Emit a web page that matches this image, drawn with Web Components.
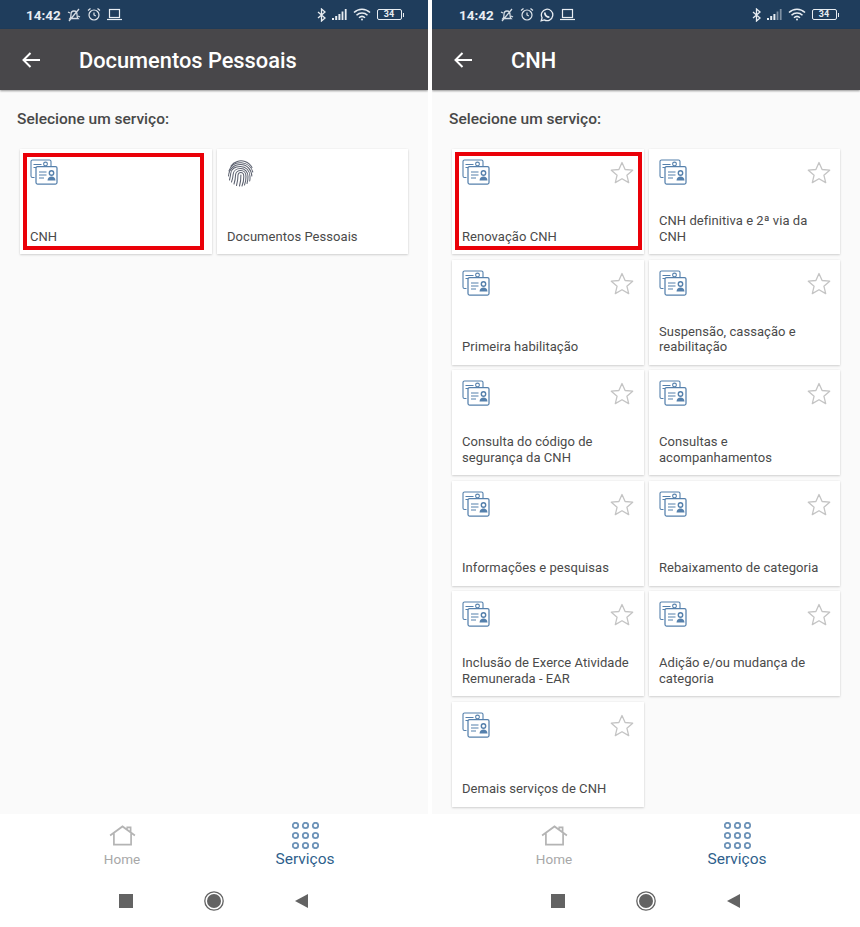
<!DOCTYPE html>
<html lang="pt"><head><meta charset="utf-8"><title>Serviços</title>
<style>html,body{margin:0;background:#fff}body{width:860px;height:927px;overflow:hidden;font-family:Roboto,"Liberation Sans",sans-serif}
.row{display:flex;gap:4px;width:860px;height:927px}
service-card:nth-child(even){--sr:9px}</style></head>
<body><div class="row">
<phone-screen title="Documentos Pessoais" extra="">
  <service-card icon="cnh" marked nostar style="--mr:8px;--mt:4px">CNH</service-card>
  <service-card icon="finger" nostar>Documentos Pessoais</service-card>
</phone-screen>
<phone-screen title="CNH" extra="wa" weak>
  <service-card icon="cnh" marked style="--mr:2px;--mt:3px">Renovação CNH</service-card>
  <service-card icon="cnh">CNH definitiva e 2ª via da CNH</service-card>
  <service-card icon="cnh">Primeira habilitação</service-card>
  <service-card icon="cnh">Suspensão, cassação e reabilitação</service-card>
  <service-card icon="cnh">Consulta do código de segurança da CNH</service-card>
  <service-card icon="cnh">Consultas e acompanhamentos</service-card>
  <service-card icon="cnh">Informações e pesquisas</service-card>
  <service-card icon="cnh">Rebaixamento de categoria</service-card>
  <service-card icon="cnh">Inclusão de Exerce Atividade Remunerada - EAR</service-card>
  <service-card icon="cnh">Adição e/ou mudança de categoria</service-card>
  <service-card icon="cnh">Demais serviços de CNH</service-card>
</phone-screen>
</div>
<script>
const CNH=`<svg width="28" height="27" viewBox="0 0 28 27" fill="none" stroke="#5580ac" stroke-width="1.1">
<path d="M4.500 18.500H2.500a1.500 1.500 0 0 1-1.500-1.500V2.500A1.500 1.500 0 0 1 2.500 1h17a1.500 1.500 0 0 1 1.500 1.500V7"/>
<path d="M3.500 5.500h8M3.500 8.500h5" stroke-width="1.200"/><circle cx="15.500" cy="5" r="1.900"/>
<rect x="6" y="7.500" width="21" height="17.500" rx="1.500" fill="#fff" stroke-width="1.250"/>
<path d="M9 13h7.500M9 16h7.500M9 19h5" stroke-width="1.200"/>
<circle cx="21.500" cy="14" r="2.200" stroke-width="1.400"/><path d="M17.500 21.500c0-5.500 8-5.500 8 0z" fill="#5580ac" stroke="none"/></svg>`;
const FINGER=`<svg width="28" height="28" viewBox="0 0 28 28" fill="none" stroke="#5d6270" stroke-width="1.05" stroke-linecap="round">
<path d="M4 7C7 2.500 13 .8 18 2.500c3 1 5.500 3 7 6"/>
<path d="M2 12C4 6 9 3.300 14.500 3.800 20 4.300 24.500 8 25.800 13"/>
<path d="M1.500 17C2 10 7 5.500 13.500 5.500 20 5.500 24.500 10.500 24.800 17"/>
<path d="M2.500 21C3 19 3.500 17 3.700 14.500 4.300 10 8.300 7.500 13.500 7.500 19 7.500 22.800 11.500 23 17.500 23.100 19 23 20.500 22.700 22"/>
<path d="M4.500 23C5.500 20.500 6 17.500 6.200 15 6.500 11.800 9.500 9.500 13.500 9.500 18 9.500 21 13 21 17.500 21 20 20.700 22.500 20 24.500"/>
<path d="M7 25C8 22 8.500 18.500 8.600 15.500 8.800 13.300 11 11.500 13.700 11.500 16.800 11.500 19 14 19 17.500 19 20.500 18.500 23.500 17.500 26"/>
<path d="M9.500 26.500C10.500 23 11 19 11 16 11.200 14.500 12.400 13.500 13.800 13.500 15.600 13.500 16.800 15 16.800 17.500 16.800 21 16.300 24 15 27"/>
<path d="M12.500 27C13.500 23.500 14 20 13.900 16"/></svg>`;
const STAR=`<svg width="24" height="23" viewBox="0 0 24 23" fill="none" stroke="#c4c4c4" stroke-width="1.3" stroke-linejoin="round"><path d="M12 1.500l3.100 7 7.600.7-5.800 5 1.800 7.400L12 17.700l-6.700 3.900 1.800-7.400-5.800-5 7.600-.7z"/></svg>`;
const WA=`<svg width="14" height="14" viewBox="0 0 14 14" fill="none" stroke="#e8edf2" stroke-width="1.3"><path d="M1.200 12.800l.9-3.100A5.700 5.700 0 1 1 4.300 11.900z"/><path d="M4.800 4.600c0 2.600 2 4.600 4.600 4.600" stroke-width="1.800"/></svg>`;

class ServiceCard extends HTMLElement{
  constructor(){super();
    const icon=this.getAttribute('icon')==='finger'?FINGER:CNH;
    const star=this.hasAttribute('nostar')?'':`<span class="star">${STAR}</span>`;
    const mark=this.hasAttribute('marked')?'<span class="mark"></span>':'';
    this.attachShadow({mode:'open'}).innerHTML=`<style>
    :host{display:flex;flex-direction:column;justify-content:space-between;position:relative;box-sizing:border-box;height:105px;background:#fff;box-shadow:0 1px 2px rgba(0,0,0,.16),0 0 2px rgba(0,0,0,.05);padding:10px;color:#4a4a4a;font-size:13px;line-height:15.500px;letter-spacing:.05px}
    .icon{height:28px;display:block}.icon svg{display:block}
    .star{position:absolute;right:var(--sr,10px);top:12px}.star svg{display:block}
    .text{height:31px;display:flex;align-items:flex-end}
    .mark{position:absolute;left:3px;right:var(--mr,8px);top:var(--mt,4px);bottom:4px;border:4px solid #ea0008;pointer-events:none}
    </style><span class="icon">${icon}</span>${star}<span class="text"><span><slot></slot></span></span>${mark}`;
  }
}
customElements.define('service-card',ServiceCard);

class StatusBar extends HTMLElement{
  constructor(){super();
    const wa=this.getAttribute('extra')==='wa';
    const bars=this.hasAttribute('weak')?'#7f90a2':'#e8edf2';
    this.attachShadow({mode:'open'}).innerHTML=`<style>
    :host{display:flex;align-items:center;justify-content:space-between;height:29px;box-sizing:border-box;background:#1f3d5c;color:#e8edf2;padding:${wa?'0 21px 0 27px':'0 24px 0 26px'};font:700 13.500px Roboto,"Liberation Sans",sans-serif;flex:none}
    .l,.r{display:flex;align-items:center;gap:6px}.r{gap:6px}svg{display:block}
    </style><div class="l"><span>14:42</span>
    <svg width="14" height="14" viewBox="0 0 14 14" fill="none" stroke="#d5dce3" stroke-width="1.300"><path d="M3 10.500c1-1 1-2 1-4 0-2 1.300-3.500 3-3.500s3 1.500 3 3.500c0 2 0 3 1 4zM2 13L12 1M1 4l2 1M13 9l-2-1"/></svg>
    <svg width="14" height="15" viewBox="0 0 14 15" fill="none" stroke="#e0e6ec" stroke-width="1.200"><circle cx="7" cy="8" r="5"/><path d="M7 5.500V8l1.800 1M1 3.500L3.500 1.500M13 3.500L10.500 1.500"/></svg>
    ${wa?WA:''}
    <svg width="15" height="13" viewBox="0 0 15 13" fill="none" stroke="#e8edf2" stroke-width="1.200"><rect x="2.500" y="1.500" width="10" height="8"/><path d="M0 11.500h15"/></svg></div>
    <div class="r">
    <svg width="9" height="14" viewBox="0 0 9 14" fill="none" stroke="#e8edf2" stroke-width="1.300"><path d="M1 4l7 6-3.500 3V1L8 4l-7 6"/></svg>
    <svg width="15" height="11" viewBox="0 0 15 11"><path d="M0 9h2v2H0z" fill="#e8edf2"/><path d="M3.200 7h2v4h-2z" fill="#e8edf2"/><path d="M6.400 5h2v6h-2z" fill="#e8edf2"/><path d="M9.600 2.500h1.800V11H9.600z" fill="${bars}"/><path d="M12.800 0h1.800v11h-1.800z" fill="${bars}"/></svg>
    <svg width="18" height="13" viewBox="0 0 18 13" fill="none" stroke="#e8edf2" stroke-width="1.500"><path d="M1 4.500c4.500-4.500 11.500-4.500 16 0M3.500 7.300c3-3 8-3 11 0M6 9.800c1.700-1.600 4.300-1.600 6 0"/><circle cx="9" cy="11.500" r="1" fill="#e8edf2" stroke="none"/></svg>
    <span style="display:flex;align-items:center"><span style="box-sizing:border-box;width:25px;height:11px;border:1px solid #e8edf2;border-radius:2px;font:700 9px/9px Roboto,'Liberation Sans',sans-serif;text-align:center">34</span><span style="width:1.500px;height:4px;background:#e8edf2;margin-left:1px"></span></span>
    </div>`;
  }
}
customElements.define('status-bar',StatusBar);

class AppBar extends HTMLElement{
  constructor(){super();
    this.attachShadow({mode:'open'}).innerHTML=`<style>
    :host{display:flex;align-items:center;height:61px;flex:none;box-sizing:border-box;background:#48474a;color:#fff;padding:2px 0 0 22px;font:500 21.800px Roboto,"Liberation Sans",sans-serif;box-shadow:0 1px 2px rgba(0,0,0,.4);position:relative}
    svg{display:block;margin:-2px 39px 0 0}
    </style><svg width="18" height="16" viewBox="0 0 18 16" fill="none" stroke="#fff" stroke-width="2"><path d="M18 8H2M8.500 1L1.500 8l7 7"/></svg><span><slot></slot></span>`;
  }
}
customElements.define('app-bar',AppBar);

class TabBar extends HTMLElement{
  constructor(){super();
    let dots='';for(const y of [3.500,13.500,23.500])for(const x of [3.500,13.500,23.500])dots+=`<circle cx="${x}" cy="${y}" r="2.700"/>`;
    this.attachShadow({mode:'open'}).innerHTML=`<style>
    :host{display:grid;grid-template-columns:244px 122px;height:63px;flex:none;background:#fff;font:14px Roboto,"Liberation Sans",sans-serif;box-sizing:border-box}
    .t{display:flex;flex-direction:column;align-items:center;justify-content:flex-end;padding-bottom:10px}
    .t svg{display:block}
    .h{color:#a8a8a8;font-size:13.500px;line-height:16px}.s{color:#2f5f8c;font-size:15.500px;line-height:17px;text-align:center;padding-bottom:9px}
    </style>
    <div class="t h"><svg width="27" height="21" viewBox="0 0 28 22" fill="none" stroke="#b4b4b4" stroke-width="1.800" style="margin-bottom:5px"><path d="M1 11L14 1.500 27 11M5 9v11.500h18V9M19 4V2.500h3.500V7"/></svg>Home</div>
    <div class="t s"><svg width="27" height="27" viewBox="0 0 27 27" fill="none" stroke="#6d93b8" stroke-width="1.800" style="margin-bottom:2px">${dots}</svg>Serviços</div>`;
  }
}
customElements.define('tab-bar',TabBar);

class NavBar extends HTMLElement{
  constructor(){super();
    this.attachShadow({mode:'open'}).innerHTML=`<style>
    :host{display:flex;align-items:center;justify-content:center;height:50px;flex:none;background:#fff;box-sizing:border-box;padding-bottom:2px}
    svg{display:block}
    </style>
    <div style="display:flex;align-items:center;gap:71px;margin-left:-2px">
    <svg width="14" height="14"><rect width="14" height="14" fill="#636363"/></svg>
    <svg width="20" height="20" viewBox="0 0 20 20"><circle cx="10" cy="10" r="9.200" fill="none" stroke="#636363" stroke-width="1.300"/><circle cx="10" cy="10" r="7" fill="#636363"/></svg>
    <svg width="13" height="14" viewBox="0 0 13 14"><path d="M13 0v14L0 7z" fill="#636363"/></svg>
    </div>`;
  }
}
customElements.define('nav-bar',NavBar);

class PhoneScreen extends HTMLElement{
  constructor(){super();
    const t=this.getAttribute('title'),e=this.getAttribute('extra')||'',w=this.hasAttribute('weak')?'weak':'';
    this.removeAttribute('title');
    this.attachShadow({mode:'open'}).innerHTML=`<style>
    :host{display:flex;flex-direction:column;width:428px;height:927px;background:#fafafa;overflow:hidden;font-family:Roboto,"Liberation Sans",sans-serif}
    main{flex:1;min-height:0;box-sizing:border-box;padding:20px 20px 0 20px}
    h2{margin:0 0 20px -3px;font:500 15.500px/19px Roboto,"Liberation Sans",sans-serif;color:#484848}
    .grid{display:grid;grid-template-columns:192px 191px;column-gap:5px;row-gap:5.500px;grid-auto-rows:105px}
    </style>
    <status-bar extra="${e}" ${w}></status-bar>
    <app-bar>${t}</app-bar>
    <main><h2>Selecione um serviço:</h2><div class="grid"><slot></slot></div></main>
    <tab-bar></tab-bar><nav-bar></nav-bar>`;
  }
}
customElements.define('phone-screen',PhoneScreen);
</script></body></html>
